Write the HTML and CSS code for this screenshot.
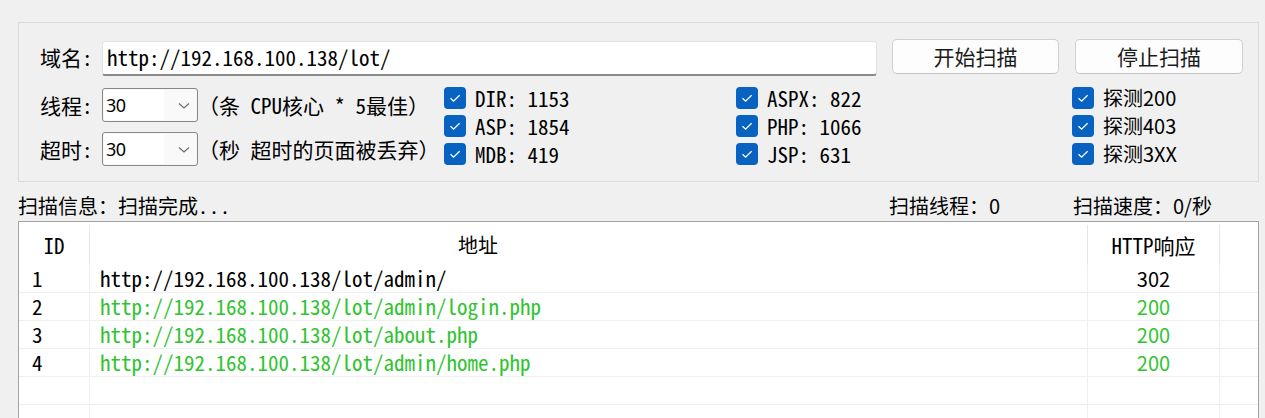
FILE: index.html
```html
<!DOCTYPE html>
<html lang="zh">
<head>
<meta charset="utf-8">
<title>扫描</title>
<link rel="stylesheet" href="styles.css">
</head>
<body>
<div class="app">
  <div class="group">
    <div class="row1">
      <span class="label mono">域名:</span>
      <div class="input mono">http://192.168.100.138/lot/</div>
      <button class="btn btn-start">开始扫描</button>
      <button class="btn btn-stop">停止扫描</button>
    </div>
    <div class="row2">
      <div class="left">
        <div class="opt">
          <span class="label mono">线程:</span>
          <div class="combo"><span class="combo-text">30</span><svg class="chev" width="12" height="8" viewBox="0 0 12 8"><path d="M1 1.5 L6 6 L11 1.5" fill="none" stroke="#6a6a6a" stroke-width="1.1"/></svg></div>
          <span class="hint mono">（条 CPU核心 * 5最佳）</span>
        </div>
        <div class="opt">
          <span class="label mono">超时:</span>
          <div class="combo"><span class="combo-text">30</span><svg class="chev" width="12" height="8" viewBox="0 0 12 8"><path d="M1 1.5 L6 6 L11 1.5" fill="none" stroke="#6a6a6a" stroke-width="1.1"/></svg></div>
          <span class="hint mono">（秒 超时的页面被丢弃）</span>
        </div>
      </div>
      <div class="checks">
        <label class="chk"><svg class="box" width="22" height="22" viewBox="0 0 22 22"><rect width="22" height="22" rx="4" fill="#0762c2"/><path d="M6.5 11.2 L9.6 14.2 L15.6 8.2" fill="none" stroke="#fff" stroke-width="1.3"/></svg><span class="mono">DIR: 1153</span></label>
        <label class="chk"><svg class="box" width="22" height="22" viewBox="0 0 22 22"><rect width="22" height="22" rx="4" fill="#0762c2"/><path d="M6.5 11.2 L9.6 14.2 L15.6 8.2" fill="none" stroke="#fff" stroke-width="1.3"/></svg><span class="mono">ASPX: 822</span></label>
        <label class="chk"><svg class="box" width="22" height="22" viewBox="0 0 22 22"><rect width="22" height="22" rx="4" fill="#0762c2"/><path d="M6.5 11.2 L9.6 14.2 L15.6 8.2" fill="none" stroke="#fff" stroke-width="1.3"/></svg><span class="sans">探测200</span></label>
        <label class="chk"><svg class="box" width="22" height="22" viewBox="0 0 22 22"><rect width="22" height="22" rx="4" fill="#0762c2"/><path d="M6.5 11.2 L9.6 14.2 L15.6 8.2" fill="none" stroke="#fff" stroke-width="1.3"/></svg><span class="mono">ASP: 1854</span></label>
        <label class="chk"><svg class="box" width="22" height="22" viewBox="0 0 22 22"><rect width="22" height="22" rx="4" fill="#0762c2"/><path d="M6.5 11.2 L9.6 14.2 L15.6 8.2" fill="none" stroke="#fff" stroke-width="1.3"/></svg><span class="mono">PHP: 1066</span></label>
        <label class="chk"><svg class="box" width="22" height="22" viewBox="0 0 22 22"><rect width="22" height="22" rx="4" fill="#0762c2"/><path d="M6.5 11.2 L9.6 14.2 L15.6 8.2" fill="none" stroke="#fff" stroke-width="1.3"/></svg><span class="sans">探测403</span></label>
        <label class="chk"><svg class="box" width="22" height="22" viewBox="0 0 22 22"><rect width="22" height="22" rx="4" fill="#0762c2"/><path d="M6.5 11.2 L9.6 14.2 L15.6 8.2" fill="none" stroke="#fff" stroke-width="1.3"/></svg><span class="mono">MDB: 419</span></label>
        <label class="chk"><svg class="box" width="22" height="22" viewBox="0 0 22 22"><rect width="22" height="22" rx="4" fill="#0762c2"/><path d="M6.5 11.2 L9.6 14.2 L15.6 8.2" fill="none" stroke="#fff" stroke-width="1.3"/></svg><span class="mono">JSP: 631</span></label>
        <label class="chk"><svg class="box" width="22" height="22" viewBox="0 0 22 22"><rect width="22" height="22" rx="4" fill="#0762c2"/><path d="M6.5 11.2 L9.6 14.2 L15.6 8.2" fill="none" stroke="#fff" stroke-width="1.3"/></svg><span class="sans">探测3XX</span></label>
      </div>
    </div>
  </div>

  <div class="status">
    <span class="st-info sans">扫描信息：扫描完成<span class="dots mono">...</span></span>
    <span class="st-threads sans">扫描线程：0</span>
    <span class="st-speed sans">扫描速度：0/秒</span>
  </div>

  <div class="table">
    <div class="thead">
      <div class="th th-id mono">ID</div>
      <div class="th th-url sans">地址</div>
      <div class="th th-code mono">HTTP响应</div>
      <div class="th th-rest"></div>
    </div>
    <div class="tr">
      <div class="td td-id mono">1</div>
      <div class="td td-url mono">http://192.168.100.138/lot/admin/</div>
      <div class="td td-code sans">302</div>
      <div class="td td-rest"></div>
    </div>
    <div class="tr ok">
      <div class="td td-id mono">2</div>
      <div class="td td-url mono">http://192.168.100.138/lot/admin/login.php</div>
      <div class="td td-code sans">200</div>
      <div class="td td-rest"></div>
    </div>
    <div class="tr ok">
      <div class="td td-id mono">3</div>
      <div class="td td-url mono">http://192.168.100.138/lot/about.php</div>
      <div class="td td-code sans">200</div>
      <div class="td td-rest"></div>
    </div>
    <div class="tr ok">
      <div class="td td-id mono">4</div>
      <div class="td td-url mono">http://192.168.100.138/lot/admin/home.php</div>
      <div class="td td-code sans">200</div>
      <div class="td td-rest"></div>
    </div>
    <div class="tr">
      <div class="td td-id"></div>
      <div class="td td-url"></div>
      <div class="td td-code"></div>
      <div class="td td-rest"></div>
    </div>
    <div class="tr tr-last">
      <div class="td td-id"></div>
      <div class="td td-url"></div>
      <div class="td td-code"></div>
      <div class="td td-rest"></div>
    </div>
  </div>
</div>
</body>
</html>
```

FILE: styles.css
```css
* { box-sizing: border-box; }
html, body {
  margin: 0;
  padding: 0;
  background: #f0f0f0;
  overflow: hidden;
}
body {
  width: 1265px;
  height: 418px;
  color: #000;
  font-family: "Noto Sans CJK SC", sans-serif;
}
.mono {
  font-family: "Noto Sans Mono CJK SC", "Liberation Mono", "Noto Sans CJK SC", monospace;
  font-size: 21px;
}
.sans {
  font-family: "Noto Sans CJK SC", sans-serif;
  font-size: 20px;
}
.app {
  padding: 22px 0 0 18px;
}
.group {
  width: 1241px;
  height: 160px;
  border: 1px solid #dadada;
  padding: 17px 0 0 21px;
}
.row1 {
  display: flex;
  align-items: flex-start;
  height: 36px;
}
.label {
  width: 62px;
  line-height: 34px;
  height: 34px;
  white-space: nowrap;
}
.input {
  width: 775px;
  height: 35px;
  margin-top: 1px;
  background: #fff;
  border: 1px solid #e2e2e2;
  border-bottom: 2px solid #8a8a8a;
  border-radius: 3px;
  padding: 0 0 0 4px;
  line-height: 31px;
}
.btn {
  height: 35px;
  margin-top: -1px;
  background: #fdfdfd;
  border: 1px solid #d0d0d0;
  border-bottom-color: #c2c2c2;
  border-radius: 5px;
  font-family: "Noto Sans CJK SC", sans-serif;
  font-size: 21px;
  line-height: 31px;
  padding: 0;
  color: #1b1b1b;
}
.btn-start { width: 167px; margin-left: 15px; }
.btn-stop { width: 168px; margin-left: 16px; }

.row2 {
  display: flex;
  margin-top: 11px;
}
.left {
  width: 404px;
  display: flex;
  flex-direction: column;
  gap: 10px;
  padding-top: 1px;
}
.opt {
  display: flex;
  align-items: center;
  height: 34px;
}
.combo {
  width: 96px;
  height: 34px;
  border: 1px solid #878787;
  border-radius: 3px;
  background: #f9f9f9;
  display: flex;
  align-items: center;
  padding: 0 7px 0 1px;
}
.combo-text {
  font-family: "Noto Sans", sans-serif;
  font-size: 18px;
  background: #fff;
  width: 60px;
  line-height: 30px;
  height: 30px;
  padding-left: 2px;
  letter-spacing: -0.5px;
}
.chev { margin-left: auto; margin-top: 2px; }
.hint {
  margin-left: 0;
  white-space: nowrap;
}
.checks {
  display: grid;
  grid-template-columns: 292px 336px 150px;
  grid-auto-rows: 28px;
}
.chk {
  display: flex;
  align-items: flex-start;
  gap: 9px;
  white-space: nowrap;
}
.chk span { line-height: 24px; margin-top: -1px; }
.box { flex: none; }

.status {
  display: flex;
  height: 39px;
  padding-top: 12px;
  line-height: 24px;
  white-space: nowrap;
}
.st-info { width: 871px; }
.dots { font-size: 20px; letter-spacing: 1px; }
.st-threads { width: 184px; }
.st-speed { width: 186px; }

.table {
  width: 1241px;
  height: 197px;
  background: #fff;
  border: 1px solid #a3a3a3;
  border-bottom: none;
  overflow: hidden;
}
.thead {
  display: grid;
  grid-template-columns: 71px 998px 132px 1fr;
  height: 43px;
  padding-top: 3px;
}
.th {
  border-right: 1px solid #e6e6e6;
  line-height: 40px;
  white-space: nowrap;
}
.th-id { text-align: center; }
.th-url { padding-left: 368px; }
.th-code { text-align: center; }
.th-rest { border-right: none; }
.tr {
  display: grid;
  grid-template-columns: 71px 998px 132px 1fr;
  height: 28px;
  border-bottom: 1px solid #efefef;
}
.tr-last { height: 13px; border-bottom: none; }
.td {
  border-right: 1px solid #efefef;
  line-height: 27px;
  white-space: nowrap;
}
.td-id { padding-left: 13px; }
.td-url { padding-left: 10px; }
.td-code { text-align: center; }
.td-rest { border-right: none; }
.tr.ok .td { color: #2fc42f; }
.tr.ok .td-id { color: #000; }
```
